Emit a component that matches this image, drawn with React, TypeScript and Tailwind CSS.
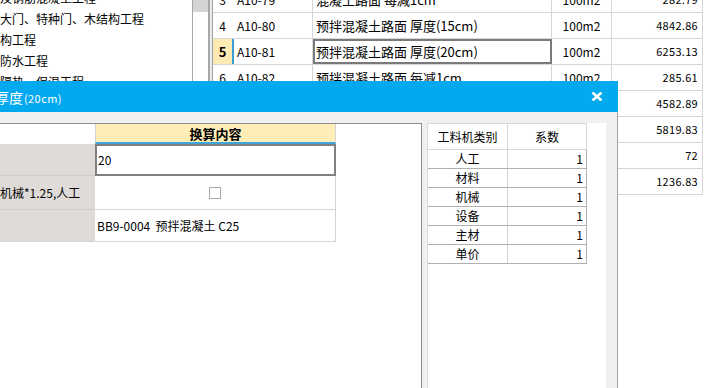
import React from 'react'

const font = { fontFamily: "'Noto Sans CJK SC', 'Noto Sans', sans-serif" }

const treeItems = ['及钢筋混凝土工程', '大门、特种门、木结构工程', '构工程', '防水工程', '隔热、保温工程']

const rows = [
    { n: '3', code: 'A10-79', name: '混凝土路面 每减1cm', unit: '100m2', amt: '282.79' },
    { n: '4', code: 'A10-80', name: '预拌混凝土路面 厚度(15cm)', unit: '100m2', amt: '4842.86' },
    { n: '5', code: 'A10-81', name: '预拌混凝土路面 厚度(20cm)', unit: '100m2', amt: '6253.13', active: true },
    { n: '6', code: 'A10-82', name: '预拌混凝土路面 每减1cm', unit: '100m2', amt: '285.61' },
    { n: '7', code: 'A10-83', name: '混凝土路面 厚度(15cm)', unit: '100m2', amt: '4582.89' },
    { n: '8', code: 'A10-84', name: '混凝土路面 厚度(20cm)', unit: '100m2', amt: '5819.83' },
    { n: '9', code: 'A10-85', name: '路面刻纹', unit: '100m2', amt: '72' },
    { n: '10', code: 'A10-86', name: '伸缩缝', unit: '10m2', amt: '1236.83' },
]

const factors = ['人工', '材料', '机械', '设备', '主材', '单价']

const Background = () => (
    <div className="flex h-full">
        <div className="w-[192px] shrink-0 overflow-hidden text-[12px] text-black">
            <div className="-mt-[13px]">
                {treeItems.map((t) => (
                    <div key={t} className="flex h-[21px] items-center whitespace-nowrap leading-none">{t}</div>
                ))}
            </div>
        </div>
        <div className="w-[18px] shrink-0 border-l border-r-2 border-[#a8a8a8] bg-white">
            <div className="h-[12px] bg-[#d4d4d4]" />
        </div>
        <div className="w-[2px] shrink-0 bg-[#ececec]" />
        <div className="shrink-0 border-l border-[#a0a0a0]">
            <div className="-mt-[13px]">
                {rows.map((r) => (
                    <div key={r.n} className="grid h-[26px] grid-cols-[21px_79px_239px_60px_91px] border-b border-[#d6d6d6] text-[12px] leading-none">
                        <div className={`flex items-center justify-center border-r-2 ${r.active ? 'border-[#3a9fd8] bg-[#fdeab4] font-bold text-[13px]' : 'border-transparent'}`}>{r.n}</div>
                        <div className="flex items-center border-r border-[#d6d6d6] pl-[3px]">{r.code}</div>
                        <div className={`flex items-center whitespace-nowrap border-r border-[#d6d6d6] pl-[3px] text-[13px] ${r.active ? 'outline-2 -outline-offset-2 outline-[#7a7a7a]' : ''}`}>{r.name}</div>
                        <div className="flex items-center justify-center border-r border-[#d6d6d6]">{r.unit}</div>
                        <div className="flex items-center justify-end border-r border-[#d6d6d6] pr-[4px] text-[11px] tracking-[0.3px]">{r.amt}</div>
                    </div>
                ))}
            </div>
        </div>
    </div>
)

const Dialog = () => (
    <div className="absolute left-0 top-[81px] flex h-[307px] w-[618px] flex-col">
        <div className="flex h-[31px] shrink-0 items-center justify-between bg-[#03a9ef] text-white">
            <div className="-ml-[5px] flex items-baseline whitespace-nowrap leading-none">
                <span className="text-[14px]">厚度</span>
                <span className="ml-[1px] text-[11px] tracking-[0.4px]">(20cm)</span>
            </div>
            <svg width="12" height="9" viewBox="0 0 12 9" className="mr-[15px]">
                <path d="M1.5 0.5 L10.5 8.5 M10.5 0.5 L1.5 8.5" stroke="white" strokeWidth="2.6" />
            </svg>
        </div>
        <div className="flex flex-1 border-r border-[#a0a0a0] bg-[#f0f0f0] pt-[11px]">
            <div className="w-[422px] shrink-0 border-r border-t border-[#8c8c8c] bg-white text-[12px] leading-none">
                <div className="flex w-[336px]">
                    <div className="h-[20px] w-[95px]" />
                    <div className="flex h-[20px] flex-1 items-center justify-center border-b-2 border-l border-r border-[#3ea6db] border-l-[#d4d4d4] border-r-[#d4d4d4] bg-[#feedb6] text-[13px] font-bold">换算内容</div>
                </div>
                <div className="flex h-[32px] w-[336px]">
                    <div className="w-[95px] border-b border-[#d0cccb] bg-[#dfdbd9]" />
                    <div className="flex flex-1 items-center border-2 border-[#808080] pl-[1px]">20</div>
                </div>
                <div className="flex h-[34px] w-[336px] border-b border-[#d4d4d4]">
                    <div className="flex w-[95px] items-center whitespace-nowrap border-b border-[#d0cccb] bg-[#dfdbd9] -mb-px">机械*1.25,人工</div>
                    <div className="flex flex-1 items-center justify-center border-r border-[#d4d4d4]">
                        <div className="h-[12px] w-[12px] border border-[#a8a8a8] bg-white" />
                    </div>
                </div>
                <div className="flex h-[32px] w-[336px] border-b border-[#d4d4d4]">
                    <div className="w-[95px] bg-[#dfdbd9]" />
                    <div className="flex flex-1 items-center whitespace-pre border-r border-[#d4d4d4] pl-[2px]">BB9-0004  预拌混凝土 C25</div>
                </div>
            </div>
            <div className="ml-[5px] w-[179px] shrink-0 border-l border-[#dcdcdc] bg-white text-[12px] leading-none">
                <div className="w-[159px]">
                    <div className="grid h-[27px] grid-cols-[80px_79px] border-b border-t border-[#d8d8d8]">
                        <div className="flex items-center justify-center border-r border-[#d8d8d8]">工料机类别</div>
                        <div className="flex items-center justify-center border-r border-[#d8d8d8]">系数</div>
                    </div>
                    {factors.map((f) => (
                        <div key={f} className="grid h-[19px] grid-cols-[80px_79px] border-b border-[#b0b0b0]">
                            <div className="flex items-center justify-center border-r border-[#d0d0d0]">{f}</div>
                            <div className="flex items-center justify-end border-r border-[#b0b0b0] pr-[3px]">1</div>
                        </div>
                    ))}
                </div>
            </div>
        </div>
    </div>
)

export default function App() {
    return (
        <div className="relative h-[388px] w-[708px] overflow-hidden bg-white text-black" style={font}>
            <Background />
            <Dialog />
        </div>
    )
}
